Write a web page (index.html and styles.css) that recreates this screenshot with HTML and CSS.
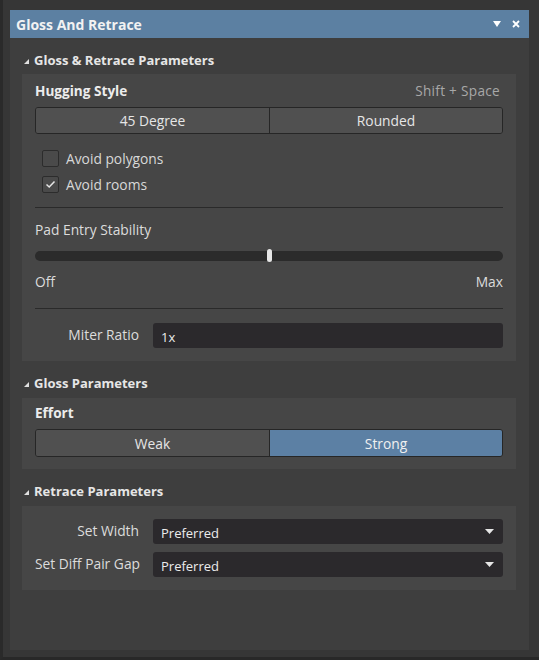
FILE: index.html
```html
<!DOCTYPE html>
<html>
<head>
<meta charset="utf-8">
<link rel="stylesheet" href="styles.css">
</head>
<body>
<div class="frame">
  <div class="panel">
    <div class="titlebar">
      <span class="title">Gloss And Retrace</span>
      <span class="ctrls">
        <svg class="tb-arrow" width="8" height="6" viewBox="0 0 8 6"><polygon points="0,0 8,0 4,6" fill="#fff"/></svg>
        <svg class="tb-close" width="8" height="8" viewBox="0 0 8 8"><path d="M1 1 L7 7 M7 1 L1 7" stroke="#fff" stroke-width="1.8"/></svg>
      </span>
    </div>
    <div class="body">
      <div class="sec-head"><svg class="tri" width="5" height="5" viewBox="0 0 5 5"><polygon points="0,5 5,5 5,0" fill="#e0e0e0"/></svg>Gloss &amp; Retrace Parameters</div>
      <div class="sec-box">
        <div class="row-head"><span class="bold">Hugging Style</span><span class="hint">Shift + Space</span></div>
        <div class="seg">
          <div class="seg-btn">45 Degree</div>
          <div class="seg-btn">Rounded</div>
        </div>
        <div class="checks">
          <label class="check"><span class="box"></span>Avoid polygons</label>
          <label class="check"><span class="box"><svg width="11" height="9" viewBox="0 0 11 9"><path d="M1.5 4.5 L4.2 7 L9.5 1.5" stroke="#e6e6e6" stroke-width="1.5" fill="none"/></svg></span>Avoid rooms</label>
        </div>
        <div class="sep"></div>
        <div class="label">Pad Entry Stability</div>
        <div class="slider"><div class="thumb"></div></div>
        <div class="range"><span>Off</span><span>Max</span></div>
        <div class="sep sep2"></div>
        <div class="field first">
          <span class="flabel">Miter Ratio</span>
          <div class="input">1x</div>
        </div>
      </div>

      <div class="sec-head"><svg class="tri" width="5" height="5" viewBox="0 0 5 5"><polygon points="0,5 5,5 5,0" fill="#e0e0e0"/></svg>Gloss Parameters</div>
      <div class="sec-box box2">
        <div class="row-head"><span class="bold">Effort</span></div>
        <div class="seg seg-tall">
          <div class="seg-btn">Weak</div>
          <div class="seg-btn active">Strong</div>
        </div>
      </div>

      <div class="sec-head"><svg class="tri" width="5" height="5" viewBox="0 0 5 5"><polygon points="0,5 5,5 5,0" fill="#e0e0e0"/></svg>Retrace Parameters</div>
      <div class="sec-box box3">
        <div class="field">
          <span class="flabel">Set Width</span>
          <div class="input select">Preferred<svg class="dd" width="9" height="5" viewBox="0 0 9 5"><polygon points="0,0 9,0 4.5,5" fill="#e6e6e6"/></svg></div>
        </div>
        <div class="field">
          <span class="flabel">Set Diff Pair Gap</span>
          <div class="input select">Preferred<svg class="dd" width="9" height="5" viewBox="0 0 9 5"><polygon points="0,0 9,0 4.5,5" fill="#e6e6e6"/></svg></div>
        </div>
      </div>
    </div>
  </div>
</div>
</body>
</html>
```

FILE: styles.css
```css
html, body {
  margin: 0;
  padding: 0;
  background: #2b2b2b;
}
.frame {
  width: 539px;
  height: 660px;
  box-sizing: border-box;
  background: #363636;
  border-left: 3px solid #2a2a2a;
  border-bottom: 3px solid #282828;
  padding: 10px 10px 7px 7px;
  font-family: "Open Sans", "Noto Sans", sans-serif;
  font-size: 13.8px;
  color: #dcdcdc;
}
.panel {
  height: 640px;
  background: #3e3e3e;
  display: flex;
  flex-direction: column;
}
.titlebar {
  height: 28px;
  background: #5c80a2;
  display: flex;
  align-items: center;
  justify-content: space-between;
  padding: 0 9px 0 6px;
}
.title {
  font-weight: 700;
  font-size: 14px;
  color: #f2f2f2;
}
.ctrls {
  display: flex;
  align-items: center;
  gap: 11px;
}
.body {
  padding: 0 13px 0 12px;
}
.sec-head {
  display: flex;
  align-items: center;
  font-weight: 700;
  font-size: 13px;
  color: #e6e6e6;
  line-height: 16px;
  padding: 14px 0 7px 2px;
}
.sec-head:first-child {
  padding-bottom: 6px;
}
.tri {
  margin-right: 5px;
  margin-top: 2px;
}
.sec-box {
  background: #464646;
  padding: 9px 13px 13px 13px;
}
.row-head {
  display: flex;
  justify-content: space-between;
  line-height: 16px;
}
.bold {
  font-weight: 700;
  font-size: 13.6px;
  color: #ececec;
}
.hint {
  color: #a8a8a8;
  font-size: 13.6px;
  letter-spacing: 0.3px;
  padding-right: 3px;
}
.seg {
  margin-top: 8px;
  height: 27px;
  box-sizing: border-box;
  display: grid;
  grid-template-columns: 1fr 1fr;
  border: 1px solid #262626;
  border-radius: 3px;
  overflow: hidden;
}
.seg-btn {
  background: #505050;
  display: flex;
  align-items: center;
  justify-content: center;
  color: #e6e6e6;
}
.seg-btn + .seg-btn {
  border-left: 1px solid #262626;
}
.seg-btn.active {
  background: #5c80a4;
  color: #f0f0f0;
}
.seg-tall {
  height: 28px;
}
.checks {
  margin-top: 11px;
  padding-left: 7px;
}
.check {
  display: flex;
  align-items: center;
  height: 26px;
  color: #d8d8d8;
}
.box {
  width: 17px;
  height: 17px;
  box-sizing: border-box;
  border: 1px solid #2c2c2c;
  background: #4a4a4a;
  border-radius: 2px;
  margin-right: 7px;
  display: flex;
  align-items: center;
  justify-content: center;
}
.sep {
  margin-top: 10px;
  height: 1px;
  background: #2a2a2a;
}
.label {
  margin-top: 14px;
  line-height: 16px;
  color: #dcdcdc;
}
.slider {
  position: relative;
  margin-top: 13px;
  height: 10px;
  background: #2b2b2b;
  border-radius: 5px;
}
.thumb {
  position: absolute;
  left: 232px;
  top: -2px;
  width: 5px;
  height: 13px;
  background: #e6e6e6;
  border-radius: 3px;
}
.range {
  margin-top: 13px;
  display: flex;
  justify-content: space-between;
  line-height: 16px;
}
.sep2 {
  margin-top: 18px;
}
.field {
  display: grid;
  grid-template-columns: 104px 1fr;
  column-gap: 14px;
  align-items: center;
  margin-top: 8px;
}
.field.first {
  margin-top: 14px;
}
.box3 .field:first-child {
  margin-top: 4px;
}
.flabel {
  text-align: right;
  color: #dcdcdc;
  margin-top: -3px;
  white-space: nowrap;
}
.input {
  height: 25px;
  box-sizing: border-box;
  background: #2b292c;
  border-radius: 3px;
  display: flex;
  align-items: center;
  padding: 2px 8px 0 8px;
  font-size: 13px;
  color: #ececec;
}
.select {
  justify-content: space-between;
  padding-right: 9px;
}
.dd {
  margin-top: -2px;
}
.box2 {
  padding-top: 7px;
  padding-bottom: 12px;
}
```
